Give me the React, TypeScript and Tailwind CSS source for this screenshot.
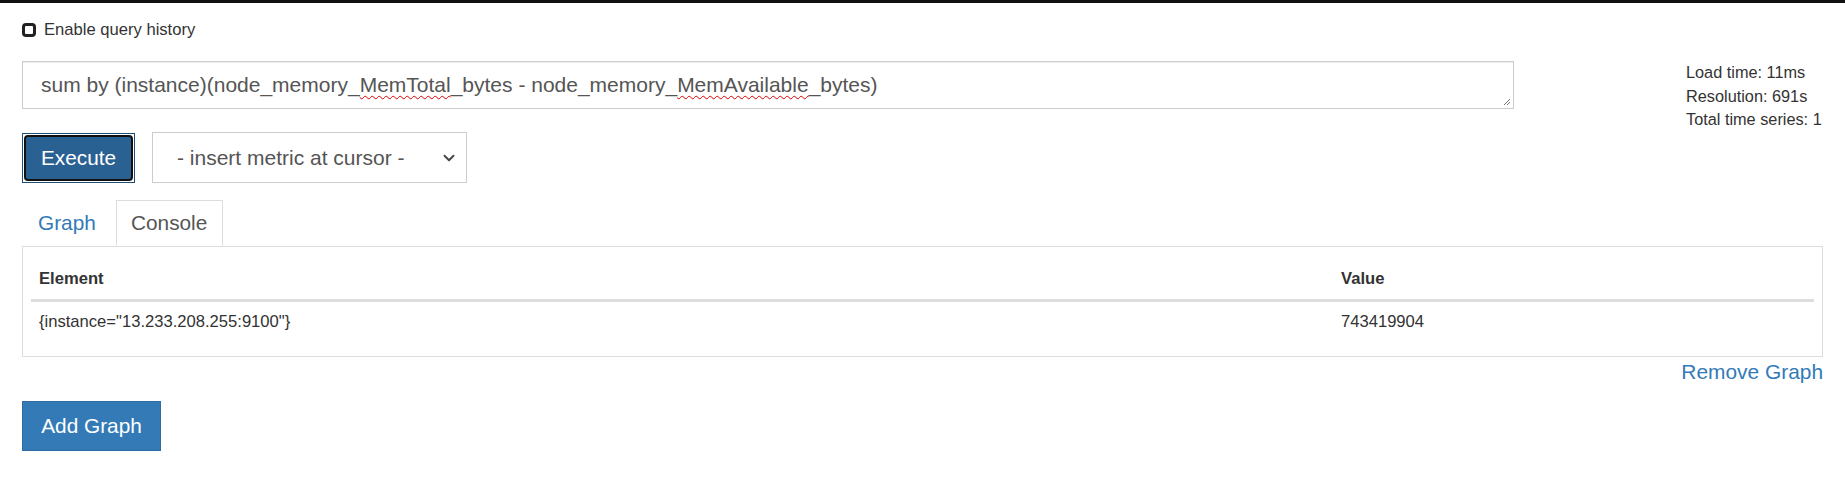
import { ChevronDown } from 'lucide-react';

const font = { fontFamily: '"Liberation Sans", Arial, Helvetica, sans-serif' };

function Squiggle({ children }: { children: React.ReactNode }) {
  return (
    <span className="underline decoration-wavy decoration-[#e00000] decoration-[1px] underline-offset-[3px]">
      {children}
    </span>
  );
}

export default function App() {
  return (
    <div style={font} className="min-h-[488px] w-[1845px] bg-white text-[#333]">
      <div className="h-[3px] bg-[#111]" />

      <div className="mt-[15px] flex h-[24px] items-center px-[22px] text-[16.6px]">
        <span className="h-[14px] w-[14px] rounded-[4px] border-[3px] border-[#222] bg-white" />
        <span className="ml-[8px] leading-[24px]">Enable query history</span>
      </div>

      <div className="mt-[19px] flex px-[22px]">
        <div className="w-[1492px]">
          <div className="relative flex h-[48px] items-center border border-[#ccc] bg-white pl-[18px] text-[21px] text-[#555] shadow-[inset_0_1px_1px_rgba(0,0,0,0.075)]">
            <span className="whitespace-pre">
              sum by (instance)(node_memory_<Squiggle>MemTotal</Squiggle>_bytes - node_memory_<Squiggle>MemAvailable</Squiggle>_bytes)
            </span>
            <svg className="absolute bottom-[2px] right-[2px]" width="8" height="8" viewBox="0 0 8 8">
              <path d="M7 1 L1 7 M7 4 L4 7" stroke="#777" strokeWidth="1" />
            </svg>
          </div>

          <div className="mt-[23px] flex items-center gap-[17px]">
            <div className="h-[50px] w-[113px] border border-[#1f4e79] bg-white p-[1px]">
              <div className="flex h-full w-full items-center justify-center rounded-[4px] border-2 border-[#111] bg-[#2a6193] text-[20.8px] text-white">
                Execute
              </div>
            </div>
            <div className="flex h-[51px] w-[315px] items-center justify-between border border-[#ccc] bg-white pl-[24px] pr-[8px] text-[21px] text-[#555]">
              <span>- insert metric at cursor -</span>
              <ChevronDown size={18} strokeWidth={2.5} className="text-[#444]" />
            </div>
          </div>
        </div>

        <div className="ml-auto w-[137px] whitespace-nowrap text-[16.3px] leading-[23.5px]">
          <div>Load time: 11ms</div>
          <div>Resolution: 691s</div>
          <div>Total time series: 1</div>
        </div>
      </div>

      <div className="px-[22px]">
        <div className="mt-[17px] flex text-[20.8px]">
          <div className="mr-[2px] flex h-[46px] w-[92px] items-center border border-transparent pl-[15px] text-[#337ab7]">
            Graph
          </div>
          <div className="relative z-10 -mb-px flex h-[46px] w-[107px] items-center border border-b-white border-[#ddd] bg-white pl-[14px] text-[#555]">
            Console
          </div>
        </div>

        <div className="border border-[#ddd] px-[8px] pt-[13px] pb-[13px] text-[16.6px]">
          <div className="flex h-[42px] items-center border-b-[3px] border-[#ddd] font-bold">
            <div className="w-[1302px] pl-[8px]">Element</div>
            <div className="pl-[8px]">Value</div>
          </div>
          <div className="flex h-[41px] items-center">
            <div className="w-[1302px] pl-[8px]">{'{instance="13.233.208.255:9100"}'}</div>
            <div className="pl-[8px]">743419904</div>
          </div>
        </div>

        <div className="mt-[3px] flex justify-end text-[20.9px] leading-[24px] text-[#337ab7]">
          Remove Graph
        </div>

        <div className="mt-[17px] flex h-[50px] w-[139px] items-center justify-center border border-[#2e6da4] bg-[#337ab7] text-[20.8px] text-white">
          Add Graph
        </div>
      </div>
    </div>
  );
}
